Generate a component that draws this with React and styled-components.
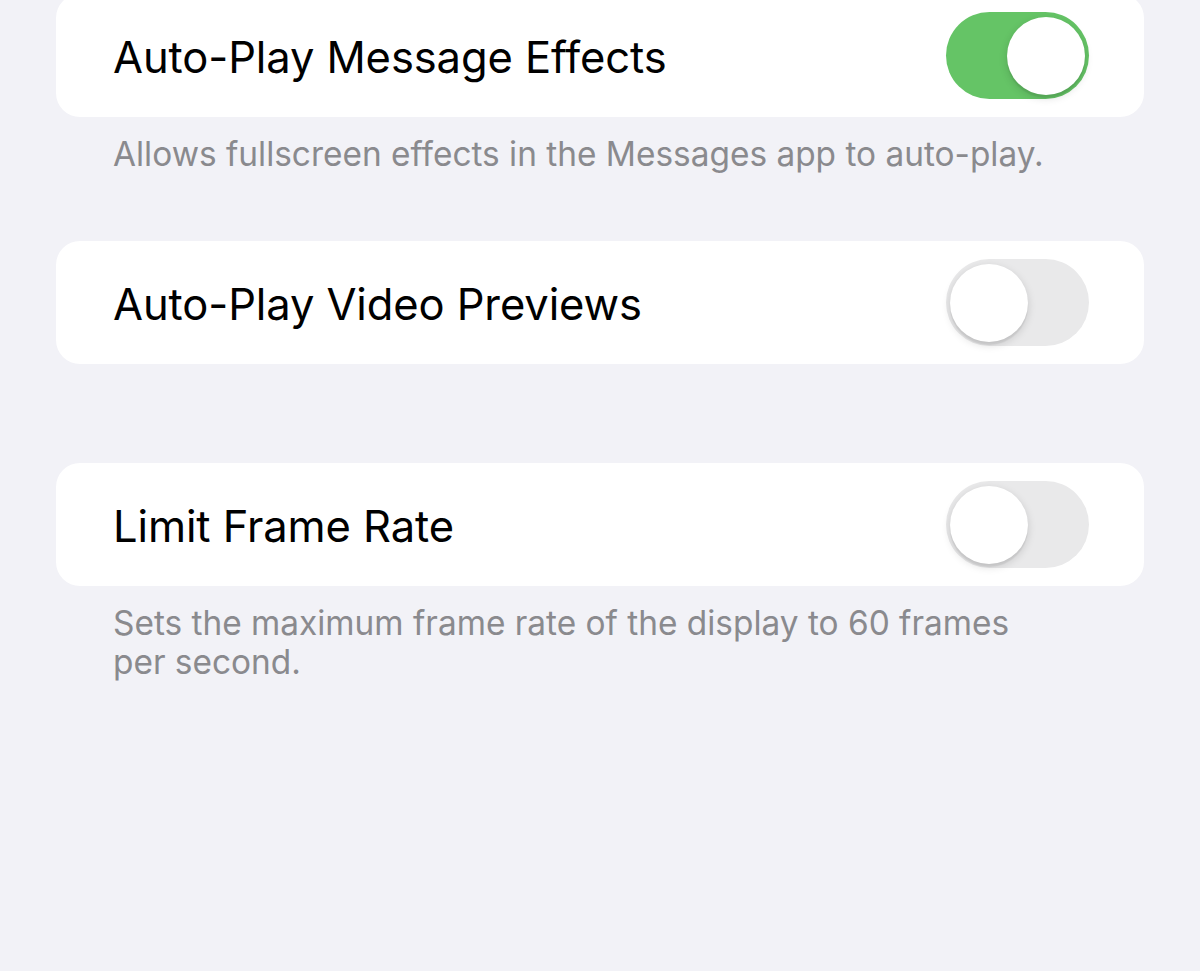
import React from 'react';
import styled, { createGlobalStyle } from 'styled-components';

const GlobalStyle = createGlobalStyle`
  html, body {
    margin: 0;
    padding: 0;
    background: #f2f2f7;
  }
  body {
    font-family: Inter, "Noto Sans", sans-serif;
    -webkit-font-smoothing: antialiased;
  }
`;

const Page = styled.div`
  width: 1200px;
  height: 971px;
  overflow: hidden;
  background: #f2f2f7;
  padding: 0 56px 0 56px;
  box-sizing: border-box;
`;

const List = styled.div`
  display: flex;
  flex-direction: column;
  margin-top: -6px;
`;

const Section = styled.section`
  margin-bottom: ${props => props.gap}px;
`;

const Card = styled.div`
  background: #ffffff;
  border-radius: 24px;
  height: 123px;
  display: flex;
  align-items: center;
  justify-content: space-between;
  padding: 0 55px 0 57px;
  box-sizing: border-box;
`;

const Label = styled.span`
  font-size: 43.5px;
  color: #000;
  letter-spacing: -0.1px;
  margin-top: 2px;
`;

const Footer = styled.p`
  margin: 18px 0 0;
  padding: 0 57px;
  font-size: 33.4px;
  line-height: 39px;
  color: #8a8a8e;
  max-width: 945px;
`;

const Track = styled.div`
  width: 143px;
  height: 87px;
  border-radius: 44px;
  background: ${props => (props.on ? '#65c466' : '#e9e9ea')};
  display: flex;
  align-items: center;
  justify-content: ${props => (props.on ? 'flex-end' : 'flex-start')};
  padding: 0 4px;
  box-sizing: border-box;
`;

const Knob = styled.div`
  width: 78px;
  height: 78px;
  border-radius: 50%;
  background: #fff;
  box-shadow: 0 3px 8px rgba(0, 0, 0, 0.15), 0 3px 1px rgba(0, 0, 0, 0.06);
`;

function Toggle({ on }) {
  return (
    <Track on={on ? 1 : 0}>
      <Knob />
    </Track>
  );
}

function SettingRow({ label, on, footer, gap }) {
  return (
    <Section gap={gap}>
      <Card>
        <Label>{label}</Label>
        <Toggle on={on} />
      </Card>
      {footer && <Footer>{footer}</Footer>}
    </Section>
  );
}

export default function App() {
  return (
    <>
      <GlobalStyle />
      <Page>
        <List>
          <SettingRow
            label="Auto-Play Message Effects"
            on
            footer="Allows fullscreen effects in the Messages app to auto-play."
            gap={67}
          />
          <SettingRow label="Auto-Play Video Previews" gap={99} />
          <SettingRow
            label="Limit Frame Rate"
            footer="Sets the maximum frame rate of the display to 60 frames per second."
            gap={0}
          />
        </List>
      </Page>
    </>
  );
}
